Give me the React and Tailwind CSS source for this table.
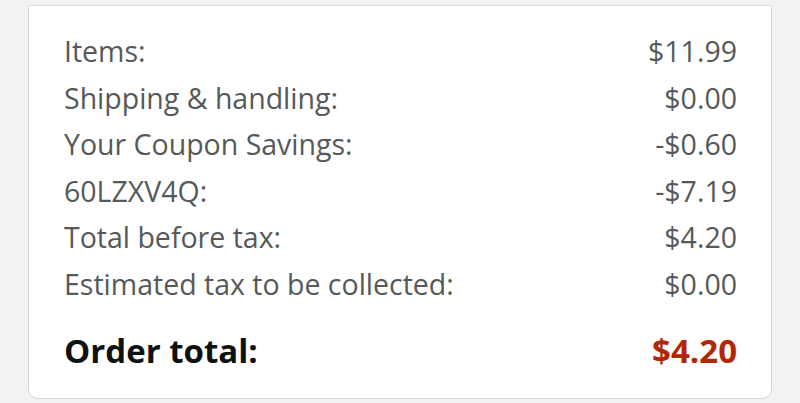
import React from 'react';

const rows = [
  ['Items:', '$11.99'],
  ['Shipping & handling:', '$0.00'],
  ['Your Coupon Savings:', '-$0.60'],
  ['60LZXV4Q:', '-$7.19'],
  ['Total before tax:', '$4.20'],
  ['Estimated tax to be collected:', '$0.00'],
];

export default function App() {
  return (
    <div
      className="w-[800px] h-[403px] bg-[#f2f2f2] pt-[5px] px-[28px] overflow-hidden"
      style={{ fontFamily: '"Open Sans", "Noto Sans", Arial, sans-serif' }}
    >
      <div className="bg-white border border-[#d5d9d9] rounded-b-[10px] h-[394px] pl-[35px] pr-[34px] pt-[22px]">
        {rows.map(([label, value]) => (
          <div key={label} className="flex justify-between text-[28.5px] leading-[46.6px] text-[#565959]">
            <span>{label}</span>
            <span>{value}</span>
          </div>
        ))}
        <div className="flex justify-between items-center mt-[20px] text-[33px] leading-[46px] font-bold">
          <span className="text-[#0f1111]">Order total:</span>
          <span className="text-[#b12704]">$4.20</span>
        </div>
      </div>
    </div>
  );
}
